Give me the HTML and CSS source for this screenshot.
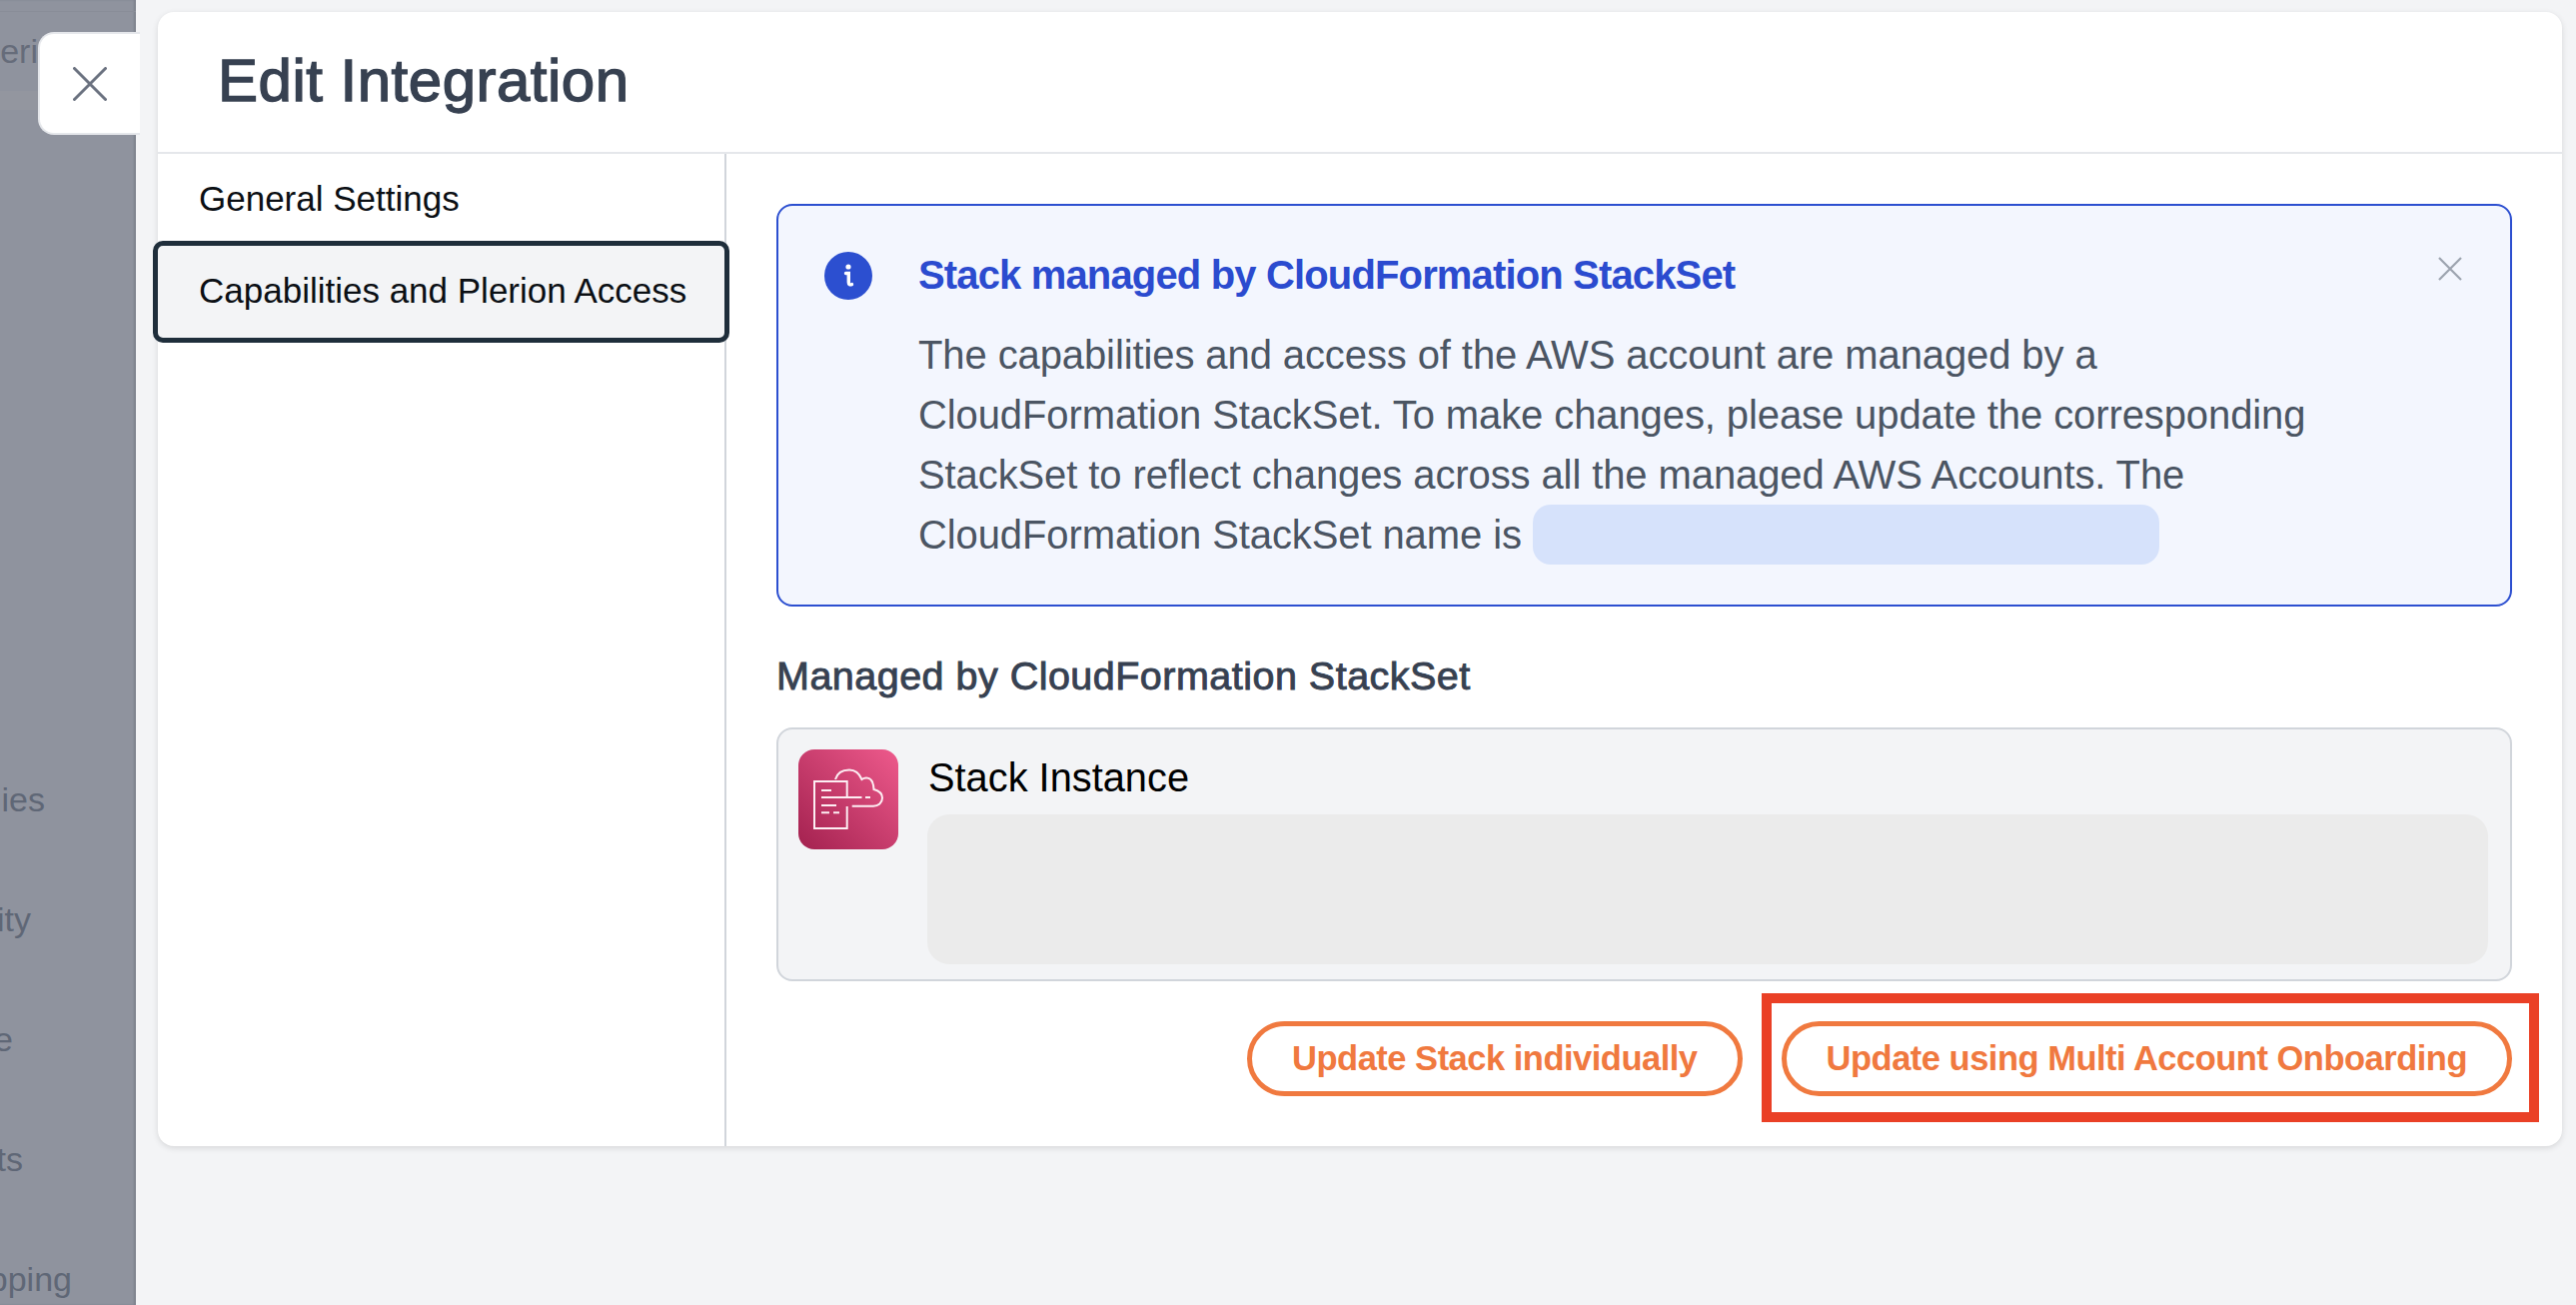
FILE: index.html
```html
<!DOCTYPE html>
<html lang="en">
<head>
<meta charset="utf-8">
<title>Edit Integration</title>
<link rel="stylesheet" href="styles.css">
</head>
<body>
<div class="page">
  <aside class="rail">
    <div class="rail-top"><span class="rail-word rail-eri">eri</span></div>
    <div class="rail-band"></div>
    <nav class="rail-list">
      <div class="rail-row rail-ies">ies</div>
      <div class="rail-row rail-ity">ity</div>
      <div class="rail-row rail-e">e</div>
      <div class="rail-row rail-ts">ts</div>
      <div class="rail-row rail-ping">pping</div>
    </nav>
  </aside>
  <main class="main">
    <button class="close-tab" aria-label="Close">
      <svg class="close-tab-icon" viewBox="0 0 34 34"><path d="M1.5 1.5 32.5 32.5M32.5 1.5 1.5 32.5"/></svg>
    </button>
    <section class="panel">
      <header class="panel-head"><h1 class="panel-title">Edit Integration</h1></header>
      <div class="panel-body">
        <nav class="side">
          <a class="side-item">General Settings</a>
          <a class="side-item side-item-active">Capabilities and Plerion Access</a>
        </nav>
        <div class="content">
          <div class="alert">
            <svg class="alert-icon" viewBox="0 0 48 48"><circle cx="24" cy="24" r="24"/><circle class="dot" cx="24" cy="15" r="2.6"/><path class="stem" d="M21.5 21.5H24.3V30.5Q24.3 33.5 27.5 32.6"/></svg>
            <div class="alert-text">
              <h2 class="alert-title">Stack managed by CloudFormation StackSet</h2>
              <p class="alert-copy">The capabilities and access of the AWS account are managed by a<br>CloudFormation StackSet. To make changes, please update the corresponding<br>StackSet to reflect changes across all the managed AWS Accounts. The<br>CloudFormation StackSet name is <span class="pill"></span></p>
            </div>
            <svg class="alert-close" viewBox="0 0 24 24"><path d="M1 1 23 23M23 1 1 23"/></svg>
          </div>
          <h3 class="section-title">Managed by CloudFormation StackSet</h3>
          <div class="stack-card">
            <div class="stack-logo">
              <svg viewBox="0 0 100 100"><path d="M48.7 48V32H16V79H48.7V57M23 48H63.5M67 48H72M23 41H33M23 56H38M23 63.3H31M35 63.3H41M37 30C39 23 45 20.5 51 20.5C57 20.5 61 24 63.5 30C67 27.5 72 28 74 32.5C75 35 75.5 37 75.5 40C81 41.5 84 44.5 84 48.5C84 53.5 80 56.7 75 56.7H53.7"/></svg>
            </div>
            <div class="stack-main">
              <div class="stack-name">Stack Instance</div>
              <div class="stack-skeleton"></div>
            </div>
          </div>
          <div class="actions">
            <button class="btn">Update Stack individually</button>
            <button class="btn btn-marked">Update using Multi Account Onboarding</button>
          </div>
        </div>
      </div>
    </section>
  </main>
</div>
</body>
</html>
```
FILE: styles.css
```css
* { box-sizing: border-box; }
html, body { margin: 0; height: 100%; }
body { font-family: "Liberation Sans", Arial, sans-serif; background: #f3f4f6; overflow: hidden; }
.page { display: flex; height: 1306px; }

.rail { width: 136px; flex: none; background: #8f939e; overflow: hidden; box-shadow: inset -2px 0 2px rgba(70,75,90,.25); color: #5f6776; font-size: 34px; }
.rail-top { margin-top: 11px; height: 80px; display: flex; align-items: center; justify-content: flex-end; padding-right: 98px; border-top: 1px solid #898d98; color: #666c7a; white-space: nowrap; }
.rail-band { height: 19px; background: #93969f; }
.rail-list { margin-top: 630px; }
.rail-row { height: 120px; display: flex; align-items: center; justify-content: flex-end; white-space: nowrap; }
.rail-ies { padding-right: 91px; }
.rail-ity { padding-right: 105px; }
.rail-e { padding-right: 123px; }
.rail-ts { padding-right: 113px; }
.rail-ping { padding-right: 64px; }

.main { flex: 1; padding: 12px 14px 0 22px; position: relative; }
.close-tab { position: absolute; left: -98px; top: 32px; width: 102px; height: 103px; background: #fff; border: 2px solid #e5e7eb; border-right: 0; border-radius: 16px 0 0 16px; padding: 0; display: flex; align-items: center; justify-content: center; }
.close-tab-icon { width: 34px; height: 34px; fill: none; stroke: #6b7280; stroke-width: 3; stroke-linecap: round; }

.panel { background: #fff; border-radius: 16px; box-shadow: 0 2px 6px rgba(0,0,0,.12); height: 1135px; display: flex; flex-direction: column; }
.panel-head { height: 142px; border-bottom: 2px solid #e5e7eb; display: flex; align-items: center; padding: 0 60px 4px; flex: none; }
.panel-title { margin: 0; font-size: 60px; font-weight: 400; -webkit-text-stroke: 1.4px #374151; color: #374151; letter-spacing: .5px; }
.panel-body { flex: 1; display: flex; min-height: 0; }

.side { width: 569px; flex: none; border-right: 2px solid #d1d5db; display: flex; flex-direction: column; }
.side-item { display: flex; align-items: center; height: 87px; padding: 2px 0 0 41px; font-size: 35px; color: #0b0f14; white-space: nowrap; }
.side-item-active { position: relative; height: 102px; margin: 0 -5px; padding: 0 0 2px 41px; background: #f3f4f6; border: 5px solid #1f2e3b; border-radius: 10px; }

.content { flex: 1; min-width: 0; padding: 50px 50px 0; }
.alert { height: 403px; border: 2px solid #2c4fd0; border-radius: 16px; background: #f3f6fe; display: flex; padding: 44px 48px 0 46px; }
.alert-icon { width: 48px; height: 48px; flex: none; margin-top: 2px; fill: #2c4fd0; }
.alert-icon .dot { fill: #fff; }
.alert-icon .stem { fill: none; stroke: #fff; stroke-width: 3.4; stroke-linecap: round; }
.alert-text { flex: 1; margin-left: 46px; min-width: 0; }
.alert-title { margin: 0; font-size: 40px; line-height: 50px; font-weight: 700; color: #2b4bcf; letter-spacing: -.85px; white-space: nowrap; }
.alert-copy { margin: 25px 0 0; font-size: 40px; line-height: 60px; color: #4b5563; letter-spacing: -.1px; white-space: nowrap; }
.pill { display: inline-block; width: 627px; height: 60px; background: #d6e2fb; border-radius: 18px; vertical-align: top; }
.alert-close { width: 24px; height: 24px; flex: none; margin-top: 7px; fill: none; stroke: #9ca3af; stroke-width: 2.2; }

.section-title { margin: 45px 0 0; height: 49px; font-size: 39.5px; line-height: 49px; font-weight: 400; -webkit-text-stroke: .9px #374151; color: #374151; letter-spacing: .48px; white-space: nowrap; }
.stack-card { margin-top: 27px; height: 254px; background: #f3f4f6; border: 2px solid #d1d5db; border-radius: 16px; display: flex; padding: 20px 22px 0 20px; }
.stack-logo { width: 100px; height: 100px; flex: none; border-radius: 16px; background: linear-gradient(45deg, #a3214f, #ee5a8c); }
.stack-logo svg { display: block; width: 100px; height: 100px; fill: none; stroke: #fdeef3; stroke-width: 2; }
.stack-main { flex: 1; margin-left: 29px; min-width: 0; }
.stack-name { height: 65px; padding-left: 1px; font-size: 39.8px; line-height: 56px; color: #000; white-space: nowrap; }
.stack-skeleton { height: 150px; background: #ebebeb; border-radius: 22px; }

.actions { margin-top: 40px; display: flex; justify-content: flex-end; gap: 39px; }
.btn { position: relative; height: 75px; padding: 0 40px; background: #fff; border: 5px solid #f0793f; border-radius: 38px; color: #f0793f; font-family: inherit; font-size: 34.5px; font-weight: 700; letter-spacing: -.5px; white-space: nowrap; }
.btn-marked::after { content: ""; position: absolute; left: -25px; right: -32px; top: -33px; bottom: -31px; border: 10px solid #ea4026; }
```
